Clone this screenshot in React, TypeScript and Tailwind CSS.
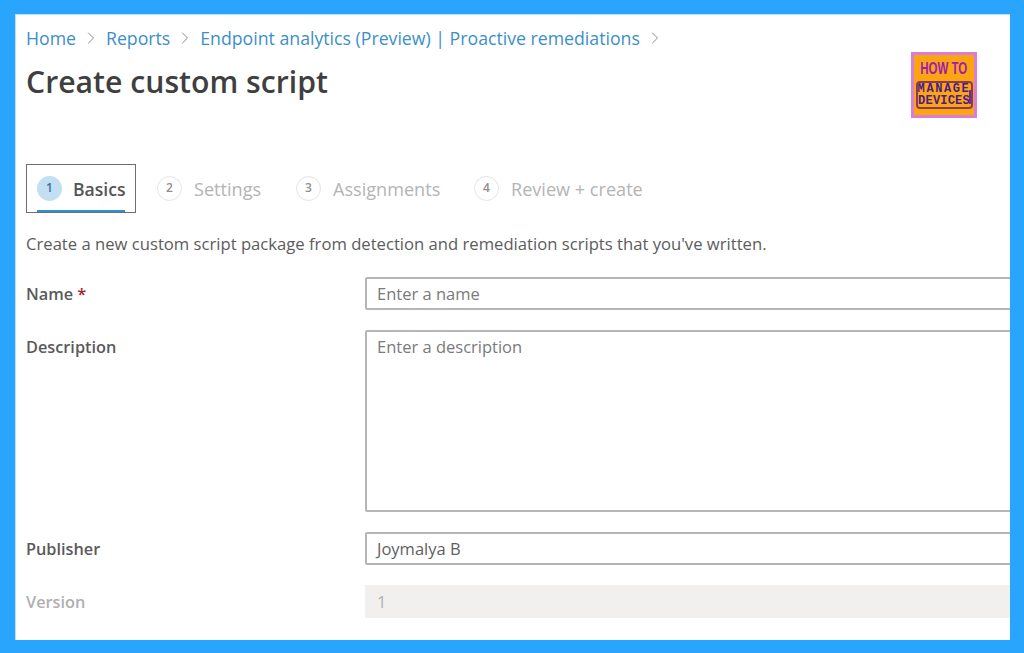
import { ChevronRight } from "lucide-react";

const crumbs = ["Home", "Reports", "Endpoint analytics (Preview) | Proactive remediations"];

const steps = [
  { n: 2, label: "Settings", w: "w-[139px]" },
  { n: 3, label: "Assignments", w: "w-[178px]" },
  { n: 4, label: "Review + create", w: "w-auto" },
];

function Logo() {
  return (
    <div className="relative flex h-[66px] w-[66px] flex-col items-center overflow-hidden border-[3px] border-[#d77fd6] bg-[#fda511] pt-[5px]">
      <div className="font-['Liberation_Sans',sans-serif] text-[16px] leading-[18px] font-bold whitespace-nowrap text-[#a01cb0] [transform:scaleX(0.72)]">
        HOW TO
      </div>
      <div className="relative mt-[3px] flex h-[28px] w-[57px] shrink-0 flex-col items-center justify-center overflow-hidden rounded-[4px] border-2 border-[#8a3a5a] font-['Liberation_Mono',monospace] text-[12px] leading-[12px] font-bold whitespace-nowrap text-[#4b1a8c]">
        <span className="tracking-[1.6px]">MANAGE</span>
        <span className="tracking-[0.2px]">DEVICES</span>
      </div>
      <div className="absolute top-[35px] right-[3px] h-[14px] w-[2px] bg-[#6a2ab0]" />
    </div>
  );
}

export default function App() {
  return (
    <div className="h-[653px] w-[1024px] overflow-hidden bg-[#2aa5fd] pt-[14px] pl-[15px] font-['Open_Sans',sans-serif]">
      <div className="h-[626px] w-[995px] overflow-hidden border-t border-l border-[#b8e2fc] bg-white pl-[10px]">
        {/* breadcrumb + title */}
        <div className="flex h-[137px] items-start justify-between pr-[33px]">
          <div>
            <div className="mt-[10px] flex h-[26px] items-center text-[17.7px] text-[#3c8fc9]">
              {crumbs.map((c) => (
                <span key={c} className="flex items-center">
                  {c}
                  <ChevronRight className="mx-[5px] text-[#8a8a8a]" size={20} strokeWidth={1.2} />
                </span>
              ))}
            </div>
            <h1 className="mt-[11px] text-[30.2px] leading-[40px] font-semibold text-[#3f3f3f]">Create custom script</h1>
          </div>
          <div className="mt-[37px]">
            <Logo />
          </div>
        </div>

        {/* wizard steps */}
        <div className="mt-[12px] flex h-[49px] items-center">
          <div className="flex h-[49px] w-[110px] flex-col justify-between border border-[#6e6e6e] pl-[10px]">
            <div className="mt-[10px] flex items-center">
              <span className="flex h-[25px] w-[25px] items-center justify-center rounded-full bg-[#c3dff3] text-[12px] font-semibold text-[#3a6f9c]">1</span>
              <span className="ml-[11px] translate-y-[1px] text-[17.6px] font-semibold text-[#555555]">Basics</span>
            </div>
            <div className="h-[2px] w-[88px] bg-[#2f8fd3]" />
          </div>
          <div className="ml-[21px] flex items-center">
            {steps.map((s) => (
              <div key={s.n} className={`flex items-center ${s.w}`}>
                <span className="flex h-[25px] w-[25px] items-center justify-center rounded-full border border-[#e4e4e4] text-[12px] font-semibold text-[#8f8f8f]">{s.n}</span>
                <span className="ml-[12px] translate-y-[1px] text-[18.1px] text-[#b4b4b4]">{s.label}</span>
              </div>
            ))}
          </div>
        </div>

        <p className="mt-[19px] h-[24px] text-[16.65px] leading-[24px] whitespace-nowrap text-[#5c5c5c]">
          Create a new custom script package from detection and remediation scripts that you've written.
        </p>

        {/* form */}
        <div className="mt-[21px] flex h-[33px] items-center">
          <label className="w-[339px] shrink-0 translate-y-[1px] text-[16.3px] font-semibold text-[#5a5a5a]">
            Name <span className="text-[#a4262c]">*</span>
          </label>
          <div className="flex h-[33px] w-[660px] shrink-0 items-center rounded-[2px] border-2 border-[#b5b5b5] pt-[2px] pl-[10px] text-[16.5px] text-[#7a7a7a]">Enter a name</div>
        </div>

        <div className="mt-[20px] flex h-[182px] items-start">
          <label className="mt-[5px] w-[339px] shrink-0 text-[16.3px] font-semibold text-[#5a5a5a]">Description</label>
          <div className="h-[182px] w-[660px] shrink-0 rounded-[2px] border-2 border-[#b5b5b5] pt-[3px] pl-[10px] text-[16.5px] text-[#7a7a7a]">Enter a description</div>
        </div>

        <div className="mt-[20px] flex h-[33px] items-center">
          <label className="w-[339px] shrink-0 translate-y-[1px] text-[16.3px] font-semibold text-[#5a5a5a]">Publisher</label>
          <div className="flex h-[33px] w-[660px] shrink-0 items-center rounded-[2px] border-2 border-[#b5b5b5] pt-[2px] pl-[10px] text-[16.5px] text-[#5f5f5f]">Joymalya B</div>
        </div>

        <div className="mt-[20px] flex h-[33px] items-center">
          <label className="w-[339px] shrink-0 translate-y-[1px] text-[16.3px] font-semibold text-[#b0b0b0]">Version</label>
          <div className="flex h-[33px] w-[660px] shrink-0 items-center bg-[#f2f0ef] pt-[2px] pl-[12px] text-[16.5px] text-[#b0b0b0]">1</div>
        </div>
      </div>
    </div>
  );
}
